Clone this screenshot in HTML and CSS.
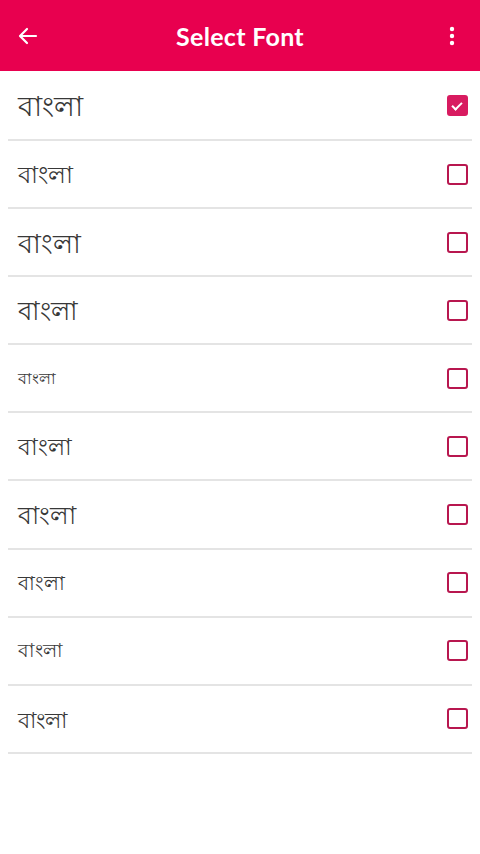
FILE: index.html
```html
<!DOCTYPE html>
<html lang="en">
<head>
    <meta charset="UTF-8">
    <meta name="viewport" content="width=device-width, initial-scale=1.0">
    <title>Select Font</title>
    <link rel="stylesheet" href="styles.css">
</head>
<body>
    <header class="app-bar">
        <button class="bar-btn" aria-label="back">
            <svg width="24" height="24" viewBox="0 0 24 24"><path d="M20 12H5M11 5l-7 7 7 7" fill="none" stroke="#fff" stroke-width="2.2" stroke-linecap="round" stroke-linejoin="round"/></svg>
        </button>
        <h1>Select Font</h1>
        <button class="bar-btn" aria-label="more">
            <svg width="24" height="24" viewBox="0 0 24 24"><circle cx="12" cy="5" r="2.2" fill="#fff"/><circle cx="12" cy="12" r="2.2" fill="#fff"/><circle cx="12" cy="19" r="2.2" fill="#fff"/></svg>
        </button>
    </header>

    <ul class="font-list">
        <li class="font-row"><span class="sample f1">বাংলা</span><span class="check checked"></span></li>
        <li class="font-row"><span class="sample f2">বাংলা</span><span class="check"></span></li>
        <li class="font-row"><span class="sample f3">বাংলা</span><span class="check"></span></li>
        <li class="font-row"><span class="sample f4">বাংলা</span><span class="check"></span></li>
        <li class="font-row"><span class="sample f5">বাংলা</span><span class="check"></span></li>
        <li class="font-row"><span class="sample f6">বাংলা</span><span class="check"></span></li>
        <li class="font-row"><span class="sample f7">বাংলা</span><span class="check"></span></li>
        <li class="font-row"><span class="sample f8">বাংলা</span><span class="check"></span></li>
        <li class="font-row"><span class="sample f9">বাংলা</span><span class="check"></span></li>
        <li class="font-row"><span class="sample f10">বাংলা</span><span class="check"></span></li>
    </ul>
</body>
</html>
```

FILE: styles.css
```css
* {
    margin: 0;
    padding: 0;
    box-sizing: border-box;
}
body {
    font-family: 'Noto Sans', 'DejaVu Sans', sans-serif;
    background: #fff;
    color: #333;
}
.app-bar {
    height: 71px;
    background-color: #e8004f;
    display: flex;
    align-items: center;
    justify-content: space-between;
    padding: 0 14px;
    color: #fff;
}
.app-bar h1 {
    font-family: 'Lato', sans-serif;
    font-weight: 700;
    font-size: 25px;
    letter-spacing: 0.3px;
}
.bar-btn {
    background: none;
    border: none;
    width: 28px;
    height: 28px;
    display: flex;
    align-items: center;
    justify-content: center;
}
.font-list {
    list-style: none;
    padding: 0 8px;
}
.font-row {
    height: 68.1px;
    display: flex;
    align-items: center;
    justify-content: space-between;
    padding: 0 4px 0 10px;
    border-bottom: 2px solid #e4e4e4;
}
.font-row:first-child {
    height: 70px;
}
.sample {
    color: #383838;
    line-height: 1;
}
.f1 { font-size: 28px; }
.f2 { font-size: 24px; }
.f3 { font-size: 27px; }
.f4 { font-size: 26px; }
.f5 { font-size: 16px; }
.f6 { font-size: 23px; }
.f7 { font-size: 25px; }
.f8 { font-size: 20px; }
.f9 { font-size: 19px; }
.f10 { font-size: 22px; }
.check {
    width: 21px;
    height: 21px;
    border: 2px solid #b8174f;
    border-radius: 3px;
    position: relative;
}
.check.checked {
    background-color: #d81b60;
    border-color: #d81b60;
}
.check.checked::after {
    content: "";
    position: absolute;
    left: 5px;
    top: 3px;
    width: 4px;
    height: 8px;
    border-right: 2px solid #fff;
    border-bottom: 2px solid #fff;
    transform: rotate(45deg);
}
```
